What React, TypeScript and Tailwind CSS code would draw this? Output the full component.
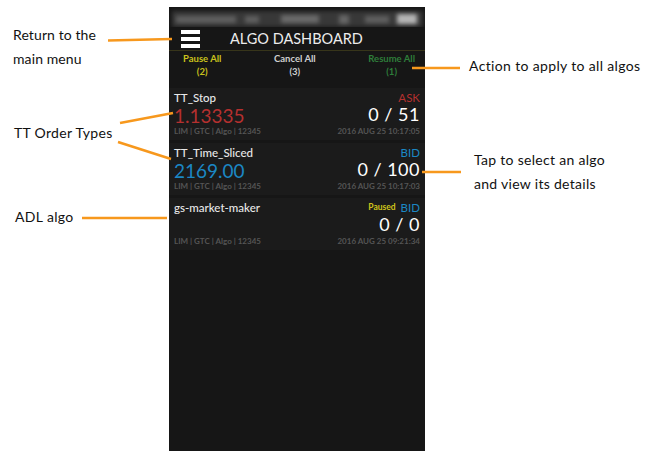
const callouts = [
  { x1: 108, y1: 40.5, x2: 172, y2: 39 },
  { x1: 412, y1: 68, x2: 460, y2: 68 },
  { x1: 120, y1: 123, x2: 173, y2: 113 },
  { x1: 118, y1: 142, x2: 171, y2: 159 },
  { x1: 82, y1: 218, x2: 167, y2: 218 },
  { x1: 422, y1: 172, x2: 461, y2: 172 },
];

const notes = [
  { text: "Return to the", cls: "left-[13px] top-[27px] tracking-[0.1px]" },
  { text: "main menu", cls: "left-[13px] top-[51px] tracking-[0.1px]" },
  { text: "TT Order Types", cls: "left-[14px] top-[125px] tracking-[0.3px]" },
  { text: "ADL algo", cls: "left-[15px] top-[209px] tracking-[0.35px]" },
  { text: "Action to apply to all algos", cls: "left-[469px] top-[58px] tracking-[0.35px]" },
  { text: "Tap to select an algo", cls: "left-[474px] top-[152px] tracking-[0.3px]" },
  { text: "and view its details", cls: "left-[474px] top-[176px] tracking-[0.3px]" },
];

const algos = [
  { name: "TT_Stop", price: "1.13335", priceCls: "text-[#b5302f]", side: "ASK", sideCls: "text-[#b5302f]", fill: "0 / 51", time: "2016 AUG 25 10:17:05", paused: false },
  { name: "TT_Time_Sliced", price: "2169.00", priceCls: "text-[#1b87c4]", side: "BID", sideCls: "text-[#1b87c4]", fill: "0 / 100", time: "2016 AUG 25 10:17:03", paused: false },
  { name: "gs-market-maker", price: "", priceCls: "", side: "BID", sideCls: "text-[#1b87c4]", fill: "0 / 0", time: "2016 AUG 25 09:21:34", paused: true },
];

function AlgoRow({ algo }: { algo: (typeof algos)[number] }) {
  return (
    <div className="h-[52px] bg-[#1b1b1b] px-[5px] flex justify-between">
      <div className="flex flex-col">
        <span className="h-[17px] mt-[1px] text-[11.5px] leading-[17px] font-medium text-[#e8e8e8]">{algo.name}</span>
        <span className={`h-[19px] text-[19px] leading-[19px] ${algo.priceCls}`}>{algo.price}</span>
        <span className="h-[12px] text-[8px] leading-[12px] font-bold text-[#555]">LIM | GTC | Algo | 12345</span>
      </div>
      <div className="flex flex-col items-end">
        <div className="h-[17px] mt-[1px] flex items-center gap-[5px]">
          {algo.paused && <span className="text-[8.5px] font-bold text-[#cfc41a]">Paused</span>}
          <span className={`text-[11.5px] leading-[17px] ${algo.sideCls}`}>{algo.side}</span>
        </div>
        <span className="h-[19px] text-[18px] leading-[17px] text-white tracking-[0.5px]">{algo.fill}</span>
        <span className="h-[12px] text-[8px] leading-[12px] font-bold text-[#555]">{algo.time}</span>
      </div>
    </div>
  );
}

export default function App() {
  return (
    <div className="relative w-[655px] h-[462px] bg-white overflow-hidden font-['Lato',sans-serif]">
      <div className="flex pl-[169px] pt-[7px]">
        <div className="w-[256px] h-[444px] bg-[#161616] flex flex-col">
          <div className="h-[20px] shrink-0 pt-[4px] pl-[3px] pr-[2px] overflow-hidden">
            <div className="w-full h-[16px] bg-[#383838] blur-[2px] flex items-center px-[4px]">
              <div className="w-[60px] h-[7px] bg-[#606060]" />
              <div className="w-[14px] h-[7px] bg-[#606060] ml-[9px]" />
              <div className="w-[38px] h-[8px] bg-[#6a6a6a] ml-[22px]" />
              <div className="w-[10px] h-[9px] bg-[#666] ml-[20px]" />
              <div className="w-[24px] h-[7px] bg-[#606060] ml-[16px]" />
              <div className="w-[20px] h-[10px] bg-[#b5b5b5] ml-[8px]" />
            </div>
          </div>
          <div className="h-[24px] shrink-0 flex items-center relative border-b border-[#37351a]">
            <div className="w-[19px] ml-[12px] flex flex-col gap-[3px]">
              <div className="h-[4px] bg-white" />
              <div className="h-[4px] bg-white" />
              <div className="h-[4px] bg-white" />
            </div>
            <span className="ml-[30px] mt-[1px] text-[14.5px] leading-[24px] text-[#ececec] whitespace-nowrap">ALGO DASHBOARD</span>
          </div>
          <div className="h-[37px] shrink-0 flex justify-between pl-[14px] pr-[10px] pt-[2px] text-[9.5px] font-bold leading-[12.5px] text-center">
            <div className="text-[#c9c21c]">
              <div>Pause All</div>
              <div>(2)</div>
            </div>
            <div className="text-[#cfcfcf]">
              <div>Cancel All</div>
              <div>(3)</div>
            </div>
            <div className="text-[#2e7d3a]">
              <div>Resume All</div>
              <div>(1)</div>
            </div>
          </div>
          <div className="flex flex-col gap-[3px]">
            {algos.map((a) => (
              <AlgoRow key={a.name} algo={a} />
            ))}
          </div>
        </div>
      </div>

      {notes.map((n) => (
        <span key={n.text} className={`absolute text-[14px] leading-[16px] text-[#111] whitespace-nowrap ${n.cls}`}>
          {n.text}
        </span>
      ))}

      <svg className="absolute inset-0" width="655" height="462" fill="none">
        {callouts.map((c) => (
          <line key={c.x1} x1={c.x1} y1={c.y1} x2={c.x2} y2={c.y2} stroke="#f7981d" strokeWidth="2.5" />
        ))}
      </svg>
    </div>
  );
}
